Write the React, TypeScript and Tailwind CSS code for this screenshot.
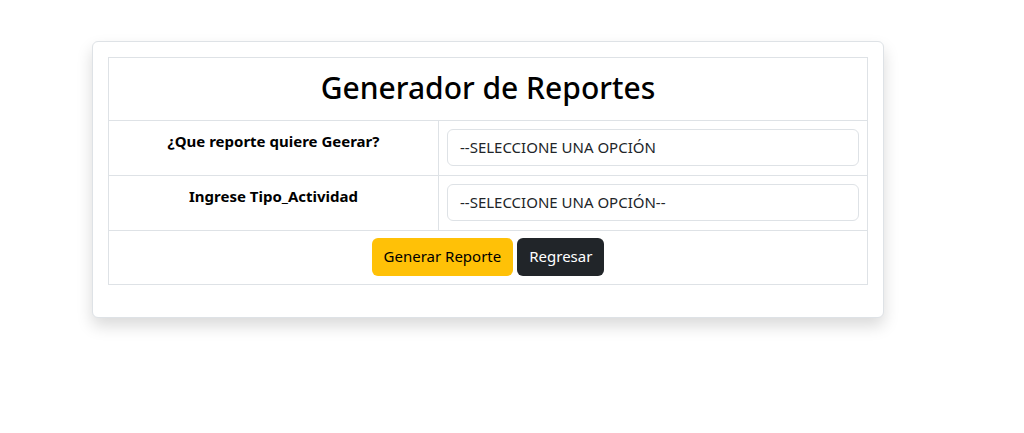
export default function App() {
  return (
    <div className="min-h-[433px] bg-white pt-[41px] pl-[92px]" style={{ fontFamily: '"Noto Sans", "Open Sans", sans-serif' }}>
      <div className="w-[792px] rounded-md border border-[#dee2e6] bg-white p-[15px] pb-8 shadow-[0_8px_16px_rgba(0,0,0,0.15)]">
        <table className="w-full border-collapse border border-[#dee2e6] text-[#212529]">
          <tbody>
            <tr className="h-[63px]">
              <td colSpan={2} className="border border-[#dee2e6] pb-[2px] text-center">
                <h2 className="text-[30px] font-medium leading-tight text-black">Generador de Reportes</h2>
              </td>
            </tr>
            <tr className="h-[55px]">
              <td className="w-[330px] border border-[#dee2e6] px-2 pt-[9px] align-top text-center text-[15px] font-bold text-black">
                ¿Que reporte quiere Geerar?
              </td>
              <td className="border border-[#dee2e6] px-2 pt-[7px] pb-[9px]">
                <div className="flex h-[37px] items-center rounded-md border border-[#dee2e6] px-3 text-[15px] text-[#212529]">
                  --SELECCIONE UNA OPCIÓN
                </div>
              </td>
            </tr>
            <tr className="h-[55px]">
              <td className="border border-[#dee2e6] px-2 pt-[9px] align-top text-center text-[15px] font-bold text-black">
                Ingrese Tipo_Actividad
              </td>
              <td className="border border-[#dee2e6] px-2 pt-[7px] pb-[9px]">
                <div className="flex h-[37px] items-center rounded-md border border-[#dee2e6] px-3 text-[15px] text-[#212529]">
                  --SELECCIONE UNA OPCIÓN--
                </div>
              </td>
            </tr>
            <tr className="h-[54px]">
              <td colSpan={2} className="border border-[#dee2e6] pb-[2px] text-center">
                <div className="flex justify-center gap-1">
                  <button className="h-[38px] rounded-md bg-[#ffc107] px-3 text-[15px] text-black">Generar Reporte</button>
                  <button className="h-[38px] rounded-md bg-[#212529] px-3 text-[15px] text-white">Regresar</button>
                </div>
              </td>
            </tr>
          </tbody>
        </table>
      </div>
    </div>
  )
}
